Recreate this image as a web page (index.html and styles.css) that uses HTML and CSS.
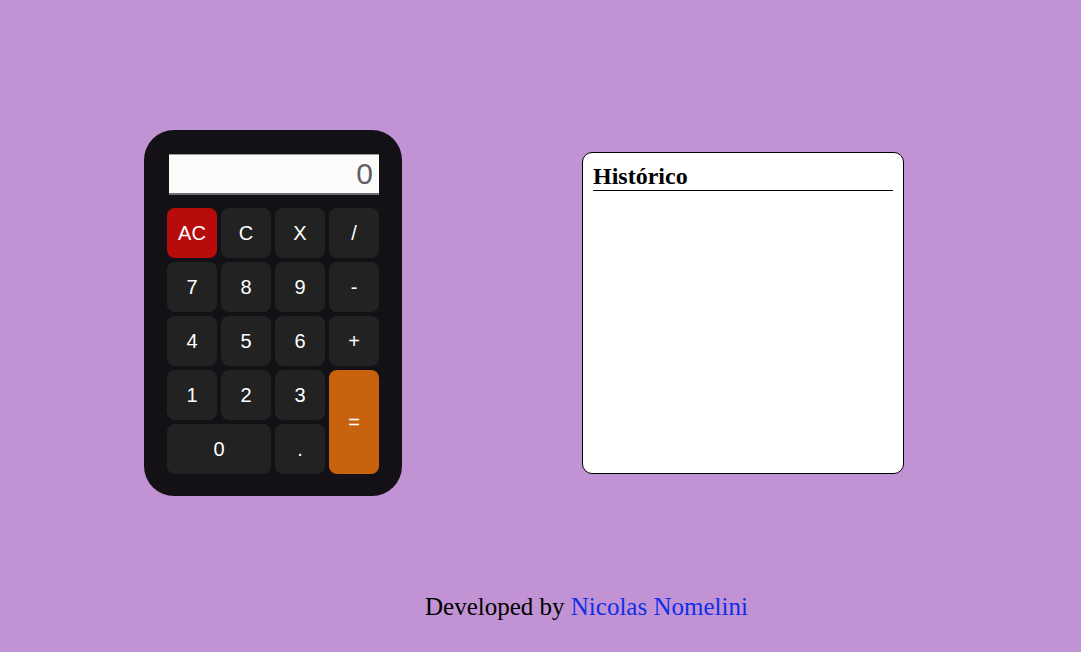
FILE: index.html
```html
<!DOCTYPE html>
<html lang="pt-BR">
<head>
<meta charset="utf-8">
<title>Calculadora</title>
<link rel="stylesheet" href="styles.css">
</head>
<body>
<main class="main">
  <div class="calc">
    <div class="display">0</div>
    <div class="keys">
      <button class="key key-ac">AC</button>
      <button class="key">C</button>
      <button class="key">X</button>
      <button class="key">/</button>
      <button class="key">7</button>
      <button class="key">8</button>
      <button class="key">9</button>
      <button class="key">-</button>
      <button class="key">4</button>
      <button class="key">5</button>
      <button class="key">6</button>
      <button class="key">+</button>
      <button class="key">1</button>
      <button class="key">2</button>
      <button class="key">3</button>
      <button class="key key-eq">=</button>
      <button class="key key-zero">0</button>
      <button class="key">.</button>
    </div>
  </div>
  <section class="history">
    <h2 class="history-title">Histórico</h2>
  </section>
</main>
<footer class="footer">Developed by <a class="footer-link" href="#">Nicolas Nomelini</a></footer>
</body>
</html>
```

FILE: styles.css
```css
html, body {
  margin: 0;
  padding: 0;
}
body {
  background: #c293d4;
  font-family: "Liberation Serif", "Times New Roman", serif;
  height: 652px;
  overflow: hidden;
}
.main {
  display: flex;
  align-items: center;
  gap: 180px;
  padding: 130px 0 0 144px;
}
.calc {
  box-sizing: border-box;
  width: 258px;
  height: 366px;
  background: #131115;
  border-radius: 30px;
  padding: 24px 23px 22px;
}
.display {
  box-sizing: border-box;
  height: 41px;
  margin: 0 0 13px 2px;
  background: #fcfbf9;
  border-top: 1px solid #9a9a9a;
  border-bottom: 2px solid #6e6e6e;
  font-family: "Liberation Sans", Arial, sans-serif;
  font-size: 30px;
  line-height: 38px;
  color: #5f5f66;
  text-align: right;
  padding-right: 6px;
}
.keys {
  display: grid;
  grid-template-columns: repeat(4, 50px);
  grid-auto-rows: 50px;
  gap: 4px;
}
.key {
  border: none;
  border-radius: 8px;
  background: #222222;
  color: #ffffff;
  font-family: "Liberation Sans", Arial, sans-serif;
  font-size: 20px;
  padding: 0;
  margin: 0;
}
.key-ac {
  background: #b80c0c;
}
.key-eq {
  background: #c9620f;
  grid-column: 4;
  grid-row: 4 / span 2;
  font-size: 20px;
}
.key-zero {
  grid-column: span 2;
}
.history {
  box-sizing: border-box;
  width: 322px;
  height: 322px;
  background: #ffffff;
  border: 1px solid #000000;
  border-radius: 10px;
  padding: 10px;
}
.history-title {
  margin: 0;
  font-size: 24px;
  font-weight: bold;
  border-bottom: 1px solid #000000;
  line-height: 26.5px;
}
.footer {
  margin-top: 97px;
  padding-left: 425px;
  font-size: 25px;
  color: #000000;
}
.footer-link {
  color: #0f2ee8;
  text-decoration: none;
}
```
